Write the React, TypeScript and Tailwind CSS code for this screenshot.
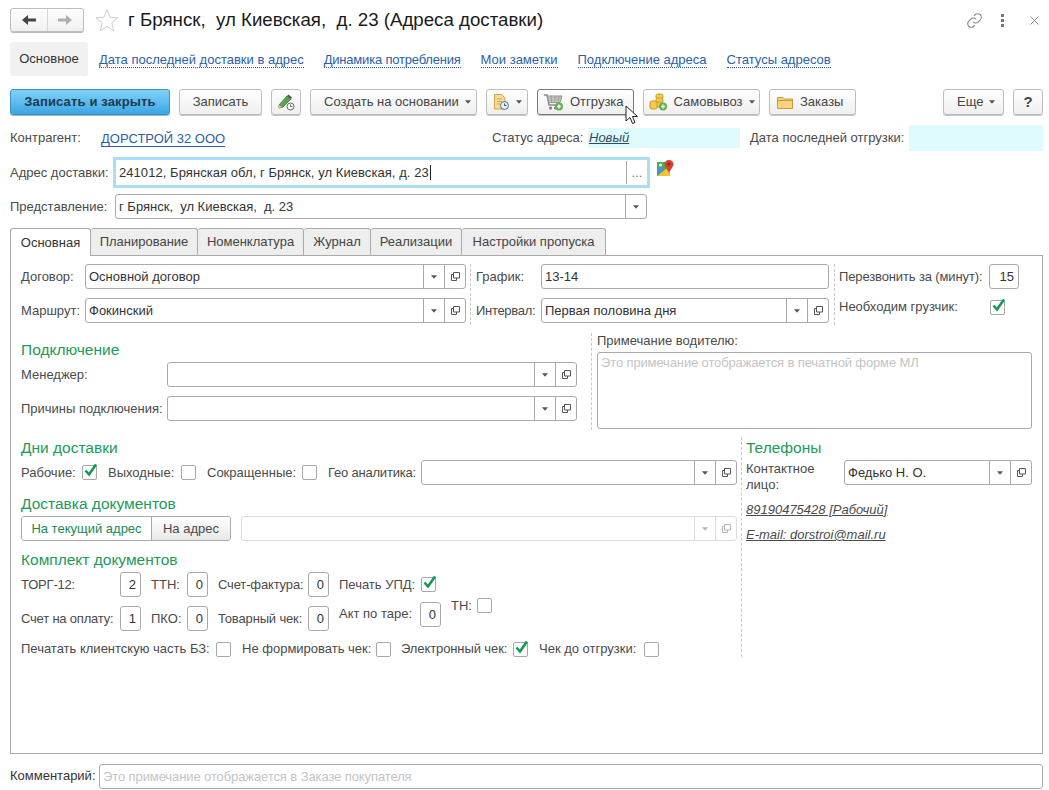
import type { ReactNode } from 'react';

const Caret = ({ light = false }: { light?: boolean }) => (
  <svg width="6" height="4" viewBox="0 0 7 4" className="shrink-0">
    <path d="M0 0h7L3.500 4z" fill={light ? '#b5b5b5' : '#555'} />
  </svg>
);

const OpenIcon = ({ light = false }: { light?: boolean }) => (
  <svg width="11" height="11" viewBox="0 0 11 11" fill="none" stroke={light ? '#b5b5b5' : '#555'} className="shrink-0">
    <path d="M3.500 1.500h6v5.500h-6z" />
    <path d="M3.500 3.500h-2v6h5v-2.500" />
  </svg>
);

function Field({
  value,
  placeholder,
  dropdown,
  open,
  disabled,
  className = '',
}: {
  value?: string;
  placeholder?: string;
  dropdown?: boolean;
  open?: boolean;
  disabled?: boolean;
  className?: string;
}) {
  return (
    <div
      className={`flex h-[25px] items-stretch rounded-[3px] border bg-white ${disabled ? 'border-[#dcdcdc]' : 'border-[#aaaaaa]'} ${className}`}
    >
      <div className="flex-1 truncate pl-[3px] leading-[24px] text-[#333333]">
        {value}
        {placeholder ? <span className="tracking-[-0.1px] text-[#c4c4c4]">{placeholder}</span> : null}
      </div>
      {dropdown ? (
        <div className={`flex w-[21px] items-center justify-center border-l ${disabled ? 'border-[#dcdcdc]' : 'border-[#aaaaaa]'}`}>
          <Caret light={disabled} />
        </div>
      ) : null}
      {open ? (
        <div className={`flex w-[21px] items-center justify-center border-l ${disabled ? 'border-[#dcdcdc]' : 'border-[#aaaaaa]'}`}>
          <OpenIcon light={disabled} />
        </div>
      ) : null}
    </div>
  );
}

const NumField = ({ value, className = '' }: { value: string; className?: string }) => (
  <div className={`h-[25px] w-[21px] rounded-[3px] border border-[#aaaaaa] bg-white pr-[4px] text-right leading-[24px] text-[#333333] ${className}`}>
    {value}
  </div>
);

const Check = ({ checked, className = '' }: { checked?: boolean; className?: string }) => (
  <div className={`relative h-[15px] w-[15px] shrink-0 rounded-[2px] border border-[#a8a8a8] bg-white ${className}`}>
    {checked ? (
      <svg width="16" height="15" viewBox="0 0 16 15" className="absolute -top-[3px] left-0">
        <path d="M2.500 7.500l3.500 4L13 1.500" fill="none" stroke="#109a55" strokeWidth="2.600" />
      </svg>
    ) : null}
  </div>
);

const Heading = ({ children, className = '' }: { children: ReactNode; className?: string }) => (
  <div className={`pt-[1px] text-[15.5px] leading-[19px] text-[#1b9a5b] ${className}`}>{children}</div>
);

const Dashed = ({ className = '' }: { className?: string }) => (
  <div className={`w-0 shrink-0 border-l border-dashed border-[#c8c8c8] ${className}`} />
);

function Btn({ children, className = '', hover }: { children: ReactNode; className?: string; hover?: boolean }) {
  return (
    <div
      className={`flex h-[26px] items-center gap-[6px] rounded-[3px] border bg-gradient-to-b from-white to-[#efefef] text-[#444444] shadow-[0_1px_0_#c4c4c4] ${hover ? 'border-[#777777]' : 'border-[#bdbdbd]'} ${className}`}
    >
      {children}
    </div>
  );
}

const PageLink = ({ children, className = '' }: { children: ReactNode; className?: string }) => (
  <span className={`mt-[1px] border-b border-dotted border-[#2b5ea8] leading-[15px] text-[#2b5ea8] ${className}`}>{children}</span>
);

const tabs = [
  { label: 'Планирование', w: 'w-[107px]' },
  { label: 'Номенклатура', w: 'w-[106px]' },
  { label: 'Журнал', w: 'w-[67px]' },
  { label: 'Реализации', w: 'w-[91px]' },
  { label: 'Настройки пропуска', w: 'w-[144px]' },
];

const PencilIcon = () => (
  <svg width="18" height="18" viewBox="0 0 18 18">
    <path d="M2 12L10 3l4 3-8 8-4 1z" fill="#58a44a" stroke="#3d7d33" strokeWidth=".8" />
    <path d="M10 3l1.500-1.500 3.500 3L14 6z" fill="#555" />
    <path d="M2 12l-.5 3 3.500-1z" fill="#e8c888" />
    <circle cx="13.500" cy="13.500" r="3.500" fill="#fff" stroke="#666" />
    <path d="M13.500 11.500v2h2" fill="none" stroke="#666" />
  </svg>
);

const DocClockIcon = () => (
  <svg width="18" height="18" viewBox="0 0 18 18">
    <path d="M2.500 1.500h7l3.500 3.500v11h-10.500z" fill="#f7dc94" stroke="#d3a44c" />
    <path d="M5 6h5M5 8.500h5M5 11h3" stroke="#d3a44c" />
    <circle cx="12.500" cy="12.500" r="4" fill="#dff0fa" stroke="#58718a" />
    <path d="M12.500 10.500v2h2" fill="none" stroke="#3d5468" />
  </svg>
);

const CartIcon = () => (
  <svg width="20" height="18" viewBox="0 0 20 18">
    <path d="M0 2h3l2 10h10" fill="none" stroke="#8a8a8a" strokeWidth="1.400" />
    <path d="M3 3h15l-2 6.500H5z" fill="#d5d5d5" stroke="#8f8f8f" />
    <path d="M4 5h13M4.500 7.200h12M7 3l.8 6.500M11 3v6.500M15 3l-.8 6.500" stroke="#8f8f8f" strokeWidth=".7" />
    <circle cx="6.500" cy="15" r="1.500" fill="#777" />
    <circle cx="11.500" cy="15" r="1.500" fill="#777" />
    <circle cx="15" cy="13.500" r="4" fill="#63b04f" />
    <path d="M15 11.500v4M13 13.500h4" stroke="#fff" strokeWidth="1.300" />
  </svg>
);

const CoinsIcon = () => (
  <svg width="19" height="18" viewBox="0 0 19 18">
    <rect x="7" y="1" width="7" height="5" rx="2" fill="#f4cb4a" stroke="#c99a24" />
    <rect x="7" y="5" width="7" height="5" rx="2" fill="#f4cb4a" stroke="#c99a24" />
    <rect x="7" y="9" width="7" height="5" rx="2" fill="#f4cb4a" stroke="#c99a24" />
    <rect x="1" y="8" width="7" height="8" rx="2" fill="#f4cb4a" stroke="#c99a24" />
    <circle cx="14" cy="13.500" r="4" fill="#63b04f" />
    <path d="M14 11.500v4M12 13.500h4" stroke="#fff" strokeWidth="1.300" />
  </svg>
);

const FolderIcon = () => (
  <svg width="16" height="13" viewBox="0 0 16 13">
    <path d="M.5 12.500v-11h5.500l1.500 1.500h8v9.500z" fill="#f8d27e" stroke="#c99a3a" />
    <path d="M.5 4.500h15" stroke="#c99a3a" />
  </svg>
);

const MapIcon = () => (
  <svg width="17" height="17" viewBox="0 0 17 17">
    <rect x="0" y="2" width="13" height="14" fill="#4caf50" />
    <path d="M0 16l13-10v10z" fill="#f4c430" />
    <path d="M0 10l4-4 3 3-7 7z" fill="#4a90d9" />
    <circle cx="3.500" cy="5" r="1.500" fill="#fff" />
    <path d="M12 0c2.700 0 4.500 1.900 4.500 4.200 0 2.600-3 4.800-4.500 9-1.500-4.200-4.500-6.400-4.500-9C7.500 1.900 9.300 0 12 0z" fill="#d8412f" />
    <circle cx="12" cy="4.200" r="1.400" fill="#8f2418" />
  </svg>
);

export default function App() {
  return (
    <div className="relative h-[790px] w-[1049px] overflow-hidden bg-white pl-[10px] pt-[8px] font-['Liberation_Sans',Arial,sans-serif] text-[13px] leading-[18px] text-[#4a4a4a]">
      {/* title */}
      <div className="flex h-[24px] w-[1033px] items-center">
        <div className="flex h-[24px] w-[74px] rounded-[3px] border border-[#bdbdbd] bg-gradient-to-b from-white to-[#f0f0f0] shadow-[0_1px_0_#bbbbbb]">
          <div className="flex flex-1 items-center justify-center border-r border-[#d6d6d6]">
            <svg width="14" height="10" viewBox="0 0 14 10"><path d="M0 5l6-5v3.500h8v3h-8v3.500z" fill="#444" /></svg>
          </div>
          <div className="flex flex-1 items-center justify-center">
            <svg width="14" height="10" viewBox="0 0 14 10"><path d="M14 5l-6-5v3.500h-8v3h8v3.500z" fill="#aeaeae" /></svg>
          </div>
        </div>
        <svg width="24" height="24" viewBox="0 0 24 24" className="ml-[11px]">
          <path d="M12 1.500l3 7.700 8 .6-6.200 5.100 2 8-6.800-4.300-6.800 4.300 2-8L1 9.800l8-.6z" fill="#fff" stroke="#cfcfcf" />
        </svg>
        <div className="ml-[9px] whitespace-pre text-[18.7px] leading-[24px] text-[#1a1a1a]">г Брянск,  ул Киевская,  д. 23 (Адреса доставки)</div>
        <div className="ml-auto flex items-center">
          <svg width="17" height="17" viewBox="0 0 24 24" fill="none" stroke="#8a8a8a" strokeWidth="1.600">
            <path d="M10 14a5 5 0 0 0 7.100 0l3-3a5 5 0 0 0-7.100-7.100l-1.500 1.500" />
            <path d="M14 10a5 5 0 0 0-7.100 0l-3 3a5 5 0 0 0 7.100 7.100l1.500-1.500" />
          </svg>
          <div className="ml-[18px] flex flex-col gap-[2px]">
            <div className="h-[3px] w-[3px] bg-[#777777]" />
            <div className="h-[3px] w-[3px] bg-[#777777]" />
            <div className="h-[3px] w-[3px] bg-[#777777]" />
          </div>
          <svg width="9" height="9" viewBox="0 0 9 9" className="ml-[26px] mr-[4px]">
            <path d="M.5.500l8 8M8.500.500l-8 8" stroke="#8a8a8a" />
          </svg>
        </div>
      </div>

      {/* page links */}
      <div className="mt-[10px] flex h-[34px] items-center">
        <div className="flex h-[34px] w-[78px] items-center justify-center rounded-[3px] bg-[#f1f1f1] text-[#333333]">Основное</div>
        <PageLink className="ml-[11px]">Дата последней доставки в адрес</PageLink>
        <PageLink className="ml-[20px] tracking-[-0.2px]">Динамика потребления</PageLink>
        <PageLink className="ml-[20px]">Мои заметки</PageLink>
        <PageLink className="ml-[20px]">Подключение адреса</PageLink>
        <PageLink className="ml-[20px]">Статусы адресов</PageLink>
      </div>

      {/* command bar */}
      <div className="mt-[13px] flex w-[1033px] gap-[9px]">
        <div className="flex h-[26px] w-[160px] items-center justify-center rounded-[3px] border border-[#3f8fbf] bg-gradient-to-b from-[#7fd3fa] to-[#3ba5e2] font-bold tracking-[0.15px] text-[#1d3a50] shadow-[0_1px_0_#9cb7c7]">
          Записать и закрыть
        </div>
        <Btn className="w-[83px] justify-center">Записать</Btn>
        <Btn className="w-[30px] justify-center"><PencilIcon /></Btn>
        <Btn className="w-[167px] pl-[13px]">Создать на основании<Caret /></Btn>
        <Btn className="w-[42px] justify-center"><DocClockIcon /><Caret /></Btn>
        <Btn hover className="w-[97px] gap-[3px] pl-[6px]"><CartIcon />Отгрузка</Btn>
        <Btn className="w-[117px] justify-center"><CoinsIcon />Самовывоз<Caret /></Btn>
        <Btn className="w-[87px] gap-[7px] pl-[7px]"><FolderIcon />Заказы</Btn>
        <Btn className="ml-auto w-[61px] pl-[13px]">Еще<Caret /></Btn>
        <Btn className="w-[30px] justify-center text-[15px] font-bold text-[#333333]">?</Btn>
      </div>

      {/* header fields */}
      <div className="mt-[10px] flex h-[26px] w-[1033px] items-center">
        <div className="w-[91px]">Контрагент:</div>
        <PageLink className="border-solid">ДОРСТРОЙ 32 ООО</PageLink>
        <div className="ml-auto flex h-[20px] items-center">
          <div className="w-[96px]">Статус адреса:</div>
          <div className="flex h-[20px] w-[152px] items-center bg-[#dffbfd] pl-[1px] italic text-[#2d4a5a] underline">Новый</div>
        </div>
        <div className="ml-[10px] w-[159px]">Дата последней отгрузки:</div>
        <div className="h-[26px] w-[134px] bg-[#dffbfd]" />
      </div>

      <div className="mt-[6px] flex h-[31px] items-center">
        <div className="w-[103px]">Адрес доставки:</div>
        <div className="flex h-[31px] w-[537px] items-stretch border-[3px] border-[#a9def5] bg-white">
          <div className="flex flex-1 items-center pl-[3px] tracking-[0.06px] text-[#333333]">
            241012, Брянская обл, г Брянск, ул Киевская, д. 23
            <span className="ml-[1px] h-[15px] w-px bg-[#222222]" />
          </div>
          <div className="my-[1px] flex w-[21px] items-center justify-center border-l border-[#aaaaaa] text-[#777777]">...</div>
        </div>
        <div className="ml-[7px] -mt-[9px]"><MapIcon /></div>
      </div>

      <div className="mt-[6px] flex h-[25px] items-center">
        <div className="w-[105px]">Представление:</div>
        <Field className="w-[532px]" value={'г Брянск,\u00a0\u00a0ул Киевская,\u00a0\u00a0д. 23'} dropdown />
      </div>

      {/* tabs */}
      <div className="relative z-10 mt-[9px] flex h-[28px] items-stretch">
        <div className="flex w-[81px] items-center justify-center rounded-t-[3px] border border-b-0 border-[#aaaaaa] bg-white text-[#333333]">Основная</div>
        {tabs.map((t) => (
          <div key={t.label} className={`flex items-center justify-center rounded-t-[3px] border border-l-0 border-[#aaaaaa] bg-[#eeeeee] text-[#444444] ${t.w}`}>
            {t.label}
          </div>
        ))}
      </div>

      <div className="-mt-px h-[499px] w-[1033px] border border-[#aaaaaa] pl-[10px] pt-[8px]">
        {/* row 1 */}
        <div className="flex h-[61px]">
          <div className="flex w-[445px] flex-col gap-[9px]">
            <div className="flex items-center">
              <div className="w-[64px]">Договор:</div>
              <Field className="w-[381px]" value="Основной договор" dropdown open />
            </div>
            <div className="flex items-center">
              <div className="w-[64px]">Маршрут:</div>
              <Field className="w-[381px]" value="Фокинский" dropdown open />
            </div>
          </div>
          <Dashed className="ml-[4px]" />
          <div className="ml-[5px] flex w-[353px] flex-col gap-[9px]">
            <div className="flex items-center">
              <div className="w-[65px]">График:</div>
              <Field className="w-[288px]" value="13-14" />
            </div>
            <div className="flex items-center">
              <div className="w-[65px] tracking-[-0.3px]">Интервал:</div>
              <Field className="w-[288px]" value="Первая половина дня" dropdown open />
            </div>
          </div>
          <Dashed className="ml-[5px]" />
          <div className="ml-[4px] w-[181px]">
            <div className="flex items-center">
              <div className="w-[150px] whitespace-nowrap tracking-[-0.13px]">Перезвонить за (минут):</div>
              <NumField className="w-[30px]" value="15" />
            </div>
            <div className="mt-[9px] flex items-center">
              <div className="w-[151px]">Необходим грузчик:</div>
              <Check checked />
            </div>
          </div>
        </div>

        {/* row 2 */}
        <div className="mt-[8px] flex h-[97px]">
          <div className="w-[556px]">
            <Heading className="mt-[6px]">Подключение</Heading>
            <div className="mt-[3px] flex items-center">
              <div className="w-[146px]">Менеджер:</div>
              <Field className="w-[410px]" dropdown open />
            </div>
            <div className="mt-[9px] flex items-center">
              <div className="w-[146px] whitespace-nowrap">Причины подключения:</div>
              <Field className="w-[410px]" dropdown open />
            </div>
          </div>
          <Dashed className="ml-[14px]" />
          <div className="ml-[5px] w-[435px]">
            <div className="h-[19px] leading-[15px]">Примечание водителю:</div>
            <div className="h-[77px] rounded-[3px] border border-[#aaaaaa] bg-white px-[3px] pt-[1px] tracking-[-0.13px] text-[#c4c4c4]">
              Это примечание отображается в печатной форме МЛ
            </div>
          </div>
        </div>

        {/* row 3 */}
        <div className="mt-[7px] flex h-[220px]">
          <div className="w-[716px]">
            <Heading>Дни доставки</Heading>
            <div className="mt-[3px] flex items-center">
              <div className="w-[61px]">Рабочие:</div>
              <Check checked />
              <div className="ml-[11px] w-[73px]">Выходные:</div>
              <Check />
              <div className="ml-[11px] w-[95px]">Сокращенные:</div>
              <Check />
              <div className="ml-[11px] w-[93px] whitespace-nowrap tracking-[-0.2px]">Гео аналитика:</div>
              <Field className="w-[316px]" dropdown open />
            </div>

            <Heading className="mt-[8px]">Доставка документов</Heading>
            <div className="mt-[3px] flex items-center">
              <div className="flex h-[25px] w-[210px] overflow-hidden rounded-[3px] border border-[#aaaaaa]">
                <div className="flex w-[129px] items-center justify-center bg-white text-[#1b8a52]">На текущий адрес</div>
                <div className="flex flex-1 items-center justify-center border-l border-[#aaaaaa] bg-gradient-to-b from-white to-[#e8e8e8]">На адрес</div>
              </div>
              <Field className="ml-[10px] w-[496px]" disabled dropdown open />
            </div>

            <Heading className="mt-[8px]">Комплект документов</Heading>
            <div className="mt-[3px] flex items-center">
              <div className="w-[99px] tracking-[-0.2px]">ТОРГ-12:</div>
              <NumField value="2" />
              <div className="ml-[10px] w-[36px]">ТТН:</div>
              <NumField value="0" />
              <div className="ml-[10px] w-[90px] whitespace-nowrap tracking-[-0.15px]">Счет-фактура:</div>
              <NumField value="0" />
              <div className="ml-[10px] w-[82px] whitespace-nowrap">Печать УПД:</div>
              <Check checked />
            </div>
            <div className="mt-[9px] flex h-[25px]">
              <div className="w-[99px] self-center whitespace-nowrap tracking-[-0.2px]">Счет на оплату:</div>
              <NumField value="1" />
              <div className="ml-[10px] w-[36px] self-center">ПКО:</div>
              <NumField value="0" />
              <div className="ml-[10px] w-[90px] self-center whitespace-nowrap tracking-[-0.15px]">Товарный чек:</div>
              <NumField value="0" />
              <div className="ml-[10px] w-[81px] whitespace-nowrap leading-[16px]">Акт по таре:</div>
              <NumField className="-mt-[4px]" value="0" />
              <div className="ml-[10px] -mt-[8px] w-[26px] leading-[16px]">ТН:</div>
              <Check className="-mt-[8px]" />
            </div>
            <div className="mt-[9px] flex items-center">
              <div className="w-[195px] whitespace-nowrap">Печатать клиентскую часть БЗ:</div>
              <Check />
              <div className="ml-[11px] w-[134px] whitespace-nowrap">Не формировать чек:</div>
              <Check />
              <div className="ml-[10px] w-[112px] whitespace-nowrap tracking-[-0.1px]">Электронный чек:</div>
              <Check checked />
              <div className="ml-[11px] w-[105px] whitespace-nowrap">Чек до отгрузки:</div>
              <Check />
            </div>
          </div>
          <Dashed className="ml-[4px]" />
          <div className="ml-[4px] w-[286px]">
            <Heading>Телефоны</Heading>
            <div className="mt-[3px] flex">
              <div className="w-[98px] pt-[1px] leading-[16px]">Контактное лицо:</div>
              <Field className="w-[188px]" value="Федько Н. О." dropdown open />
            </div>
            <div className="mt-[8px] italic underline">89190475428 [Рабочий]</div>
            <div className="mt-[7px] italic underline">E-mail: dorstroi@mail.ru</div>
          </div>
        </div>
      </div>

      {/* comment */}
      <div className="mt-[10px] flex h-[24px] items-center">
        <div className="w-[89px] text-[#333333]">Комментарий:</div>
        <Field className="h-[24px] w-[944px]" placeholder="Это примечание отображается в Заказе покупателя" />
      </div>

      {/* mouse pointer */}
      <svg width="14" height="20" viewBox="0 0 14 20" className="absolute left-[625px] top-[105px]">
        <path d="M1 1v15l4-3.500 2.500 6 2.500-1-2.500-6h5z" fill="#fff" stroke="#222" />
      </svg>
    </div>
  );
}
